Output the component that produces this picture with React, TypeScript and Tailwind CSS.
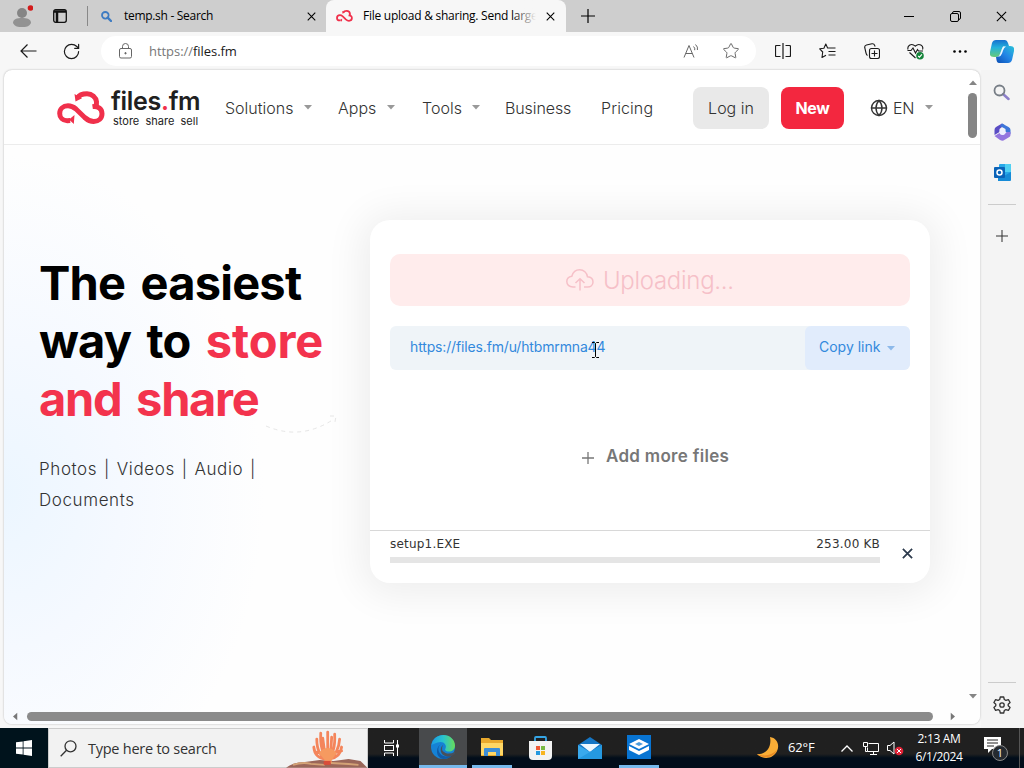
import type { ReactNode } from "react";
import { Globe, RotateCw, Search, Settings, Star } from "lucide-react";

const Slot = ({ className, children }: { className: string; children?: ReactNode }) => (
  <div className={`flex shrink-0 items-center justify-center ${className}`}>{children}</div>
);

const Caret = ({ className = "text-[#999]" }: { className?: string }) => (
  <svg className={`shrink-0 ${className}`} width="8" height="5" viewBox="0 0 8 5" fill="currentColor">
    <path d="M0 0h8L4 4.5z" />
  </svg>
);

const Cross = ({ size = 10, width = 1.2 }: { size?: number; width?: number }) => (
  <svg width={size} height={size} viewBox="0 0 10 10" stroke="currentColor" strokeWidth={width} fill="none">
    <path d="M.8.8l8.4 8.4M9.2.8L.8 9.2" />
  </svg>
);

const Plus = ({ size = 13, width = 1.2 }: { size?: number; width?: number }) => (
  <svg width={size} height={size} viewBox="0 0 14 14" stroke="currentColor" strokeWidth={width} fill="none">
    <path d="M7 0v14M0 7h14" />
  </svg>
);

const CloudLogo = ({ width, height }: { width: number; height: number }) => (
  <svg width={width} height={height} viewBox="0 0 48 34" fill="none" stroke="#f0304b" strokeWidth="5">
    <path d="M20.500 7C22.500 3.500 26 2.800 30 2.800c5 0 9 3.400 9.500 8 .2 2 0 3-.8 4.400" />
    <path d="M35.500 15.600c5.500-.8 9.500 2.400 9.500 7.200 0 4.700-3.800 7.700-8.300 7.700-4 0-6.500-1.800-9-4L19 18c-2.500-2-5-3.200-8-3.200-5 0-8.300 3.400-8.300 7.600 0 4 3 7.300 7.500 7.300l3-.2" />
    <path d="M17.500 3L18.500 10.500l6.500-3.200zM17.500 24l-5.500 4.500 4.800 4.500z" fill="#f0304b" stroke="none" />
  </svg>
);

const TabBar = () => (
  <div className="flex h-8 shrink-0 bg-[#cecece] text-black">
    <Slot className="w-11">
      <svg width="22" height="24" viewBox="0 0 22 24">
        <circle cx="11" cy="9" r="5" fill="#858585" />
        <path d="M2 19c0-4 4-5 9-5s9 1 9 5c-2 4-5 4-9 4s-7 0-9-4z" fill="#929292" />
        <circle cx="19.500" cy="4" r="2.800" fill="#d31b1b" />
      </svg>
    </Slot>
    <Slot className="w-8">
      <svg width="14" height="14" viewBox="0 0 14 14" fill="none" stroke="#111" strokeWidth="1.3">
        <rect x=".7" y=".7" width="12.600" height="12.600" rx="2" />
        <path d="M1 2.500h12M4 3v10" strokeWidth="2.500" />
      </svg>
    </Slot>
    <div className="ml-[11px] h-5 w-px self-center bg-[#888]" />
    <Slot className="ml-1.5 w-6">
      <svg width="11" height="11" viewBox="0 0 11 11" fill="none" stroke="#3f7cc2">
        <circle cx="4.300" cy="4.300" r="3.300" strokeWidth="1.800" />
        <path d="M6.700 6.700L10 10" strokeWidth="2.400" strokeLinecap="round" />
      </svg>
    </Slot>
    <div className="ml-1.5 w-[176px] font-['Open_Sans'] text-xs leading-8 tracking-[-0.3px]">temp.sh - Search</div>
    <Slot className="w-[22px]"><Cross size={9} /></Slot>
    <div className="ml-[4px] flex w-[240px] rounded-t-lg bg-[#f7f7f7]">
      <Slot className="ml-2 w-5"><CloudLogo width={17} height={12} /></Slot>
      <div className="relative ml-[9px] w-[173px] overflow-hidden whitespace-nowrap font-['Open_Sans'] text-xs leading-8 tracking-[-0.25px]">
        File upload &amp; sharing. Send large
        <div className="absolute inset-y-0 right-0 w-6 bg-linear-to-r from-transparent to-[#f7f7f7]" />
      </div>
      <Slot className="ml-[3px] w-[22px]"><Cross size={9} /></Slot>
    </div>
    <Slot className="w-[43px]"><Plus size={14} /></Slot>
    <div className="ml-auto flex">
      <Slot className="w-[46px]"><div className="h-px w-2.5 bg-black" /></Slot>
      <Slot className="w-[46px]">
        <svg width="11" height="11" viewBox="0 0 11 11" fill="none" stroke="black">
          <rect x=".5" y="2.500" width="8" height="8" rx="1.500" />
          <path d="M2.500 2.500v-.5Q2.500.5 4 .5h5q1.500 0 1.500 1.500v5q0 1.500-2 1.500" />
        </svg>
      </Slot>
      <Slot className="w-[46px]"><Cross size={11} width={1} /></Slot>
    </div>
  </div>
);

const Toolbar = () => (
  <div className="flex h-[38px] shrink-0 items-center bg-[#f7f7f7] pl-1.5 text-[#1a1a1a]">
    <Slot className="w-11">
      <svg width="17" height="14" viewBox="0 0 17 14" fill="none" stroke="currentColor" strokeWidth="1.2">
        <path d="M16.500 7H1M7.500.5L1 7l6.500 6.500" />
      </svg>
    </Slot>
    <Slot className="w-[43px]"><RotateCw size={19} strokeWidth={1.5} /></Slot>
    <div className="ml-2 flex h-[30px] w-[655px] items-center rounded-full bg-white">
      <Slot className="ml-3 w-6 text-[#666]">
        <svg width="13" height="16" viewBox="0 0 13 16" fill="none" stroke="currentColor">
          <rect x=".5" y="5.500" width="12" height="9.500" rx="1.500" />
          <path d="M3.500 5.500V3.500a3 3 0 016 0v2" />
          <circle cx="6.500" cy="10.200" r=".7" fill="currentColor" />
        </svg>
      </Slot>
      <div className="ml-3 pt-px font-['Open_Sans'] text-[13px] tracking-[-0.05px] text-[#777]">
        https://<span className="text-[#1a1a1a]">files.fm</span>
      </div>
      <Slot className="ml-auto w-10 text-[#666]">
        <svg width="17" height="16" viewBox="0 0 17 16" fill="none" stroke="currentColor">
          <path d="M1 14.500L6 2.500l5 12M2.800 10.500h6.400M10.500 3.500q1.800 1.500 1.200 3.700M12.500 1.500q2.800 2.500 1.900 5.500" />
        </svg>
      </Slot>
      <Slot className="mr-[5px] w-10 text-[#666]"><Star size={18} strokeWidth={1.3} /></Slot>
    </div>
    <Slot className="ml-[5px] w-11">
      <svg width="16" height="16" viewBox="0 0 16 16" fill="none" stroke="currentColor">
        <path d="M5.500 2.500h-4q-1 0-1 1v9q0 1 1 1h4M10.500 2.500h4q1 0 1 1v9q0 1-1 1h-4M8 0v16" strokeWidth="1.200" />
      </svg>
    </Slot>
    <Slot className="w-[45px]">
      <svg width="17" height="16" viewBox="0 0 17 16" fill="none" stroke="currentColor" strokeWidth="1.100" strokeLinejoin="round">
        <path d="M10 5L8.600 5 6.800 1 4.900 5.200.7 5.800l3 3.200L3 14.500l4-2.200M10 5h6.500M9.500 8.500h7M9.500 12h7" />
      </svg>
    </Slot>
    <Slot className="w-11">
      <svg width="16" height="17" viewBox="0 0 16 17" fill="none" stroke="currentColor" strokeWidth="1.100">
        <rect x="5.500" y="5.500" width="10" height="10" rx="2" />
        <path d="M10.500 7.500v6M7.500 10.500h6M3.500 12.500Q2.500 12 2 10L.7 4.500Q.5 2.500 2.500 2L8 .8q2-.3 2.700 1.700l.5 1" />
      </svg>
    </Slot>
    <Slot className="w-[43px]">
      <svg width="17" height="17" viewBox="0 0 17 17" fill="none" stroke="currentColor" strokeWidth="1.100">
        <path d="M1 6.500C0 2.500 4.500-.5 8.300 3.200 12-.5 17 2.500 15.500 6.500M.5 7.500H4L6 5l2.500 5 2-3.500 1 1.500h4.500M2.500 9.500l6 5.500" />
        <circle cx="13" cy="12.700" r="3.800" fill="#16843b" stroke="none" />
        <path d="M11.200 13l1.300 1.200 2.400-2.800" stroke="white" />
      </svg>
    </Slot>
    <Slot className="ml-px w-11">
      <svg width="14" height="3" viewBox="0 0 14 3"><circle cx="1.500" cy="1.500" r="1.300" /><circle cx="7" cy="1.500" r="1.300" /><circle cx="12.500" cy="1.500" r="1.300" /></svg>
    </Slot>
    <Slot className="w-10">
      <svg width="24" height="23" viewBox="0 0 24 23">
        <defs>
          <linearGradient id="cpA" x1="0" y1="0" x2="0" y2="1"><stop stopColor="#1670cf" /><stop offset=".45" stopColor="#23b1dc" /><stop offset="1" stopColor="#66ca78" /></linearGradient>
          <linearGradient id="cpB" x1="1" y1="0" x2="0" y2="1"><stop stopColor="#2ac3d8" /><stop offset=".5" stopColor="#2385e6" /><stop offset="1" stopColor="#0c4fb4" /></linearGradient>
        </defs>
        <path d="M6 0h9q2 0 3 3l1 3h-4q-2 0-3 3l-2 5q-1 3-4 3H4q-5 0-4-5L2 3q1-3 4-3z" fill="url(#cpA)" />
        <path d="M18 23H9q-2 0-2.500-3L6 17q3 0 4-3l2-5q1-3 4-3h4q5 0 4 5l-2 9q-1 3-4 3z" fill="url(#cpB)" />
        <path d="M13 6.500h3q-2 1-3 4l-1 3q-1 3-4 3.500 1-.5 2-3l1.500-4q.5-2 1.500-3.500z" fill="#eefaff" />
      </svg>
    </Slot>
  </div>
);

const SiteHeader = () => (
  <header className="flex h-[75px] shrink-0 items-center border-b border-[#ececec] pt-px pl-[53px] font-[Inter] text-base font-light text-[#333]">
    <div className="flex w-[168px]">
      <div className="pt-0.5"><CloudLogo width={48} height={34} /></div>
      <div className="ml-1.5">
        <div className="h-[26px] text-[25px] leading-[25px] font-semibold tracking-[-0.3px] text-[#202020]">
          files<span className="text-[#f0304b]">.</span>fm
        </div>
        <div className="pl-0.5 text-[11px] leading-3 font-normal whitespace-pre text-[#222]">store  share  sell</div>
      </div>
    </div>
    <div className="flex w-[113px] items-center"><span className="w-[79px]">Solutions</span><Caret /></div>
    <div className="flex w-[84px] items-center"><span className="w-[49px]">Apps</span><Caret /></div>
    <div className="flex w-[83px] items-center"><span className="w-[50px]">Tools</span><Caret /></div>
    <div className="w-24 tracking-[-0.1px]">Business</div>
    <div className="w-[92px] tracking-[0.1px]">Pricing</div>
    <div className="h-[42px] w-[76px] rounded-lg bg-[#e9e9e9] text-center leading-[42px]">Log in</div>
    <div className="ml-3 h-[42px] w-[63px] rounded-lg bg-[#f3273f] text-center leading-[42px] font-bold tracking-[-0.4px] text-white">New</div>
    <Globe size={18} strokeWidth={1.9} className="ml-[26px]" />
    <span className="ml-[5px] w-8 tracking-[-0.2px]">EN</span>
    <Caret />
  </header>
);

const UploadCard = () => (
  <div className="mt-[75px] ml-[366px] flex h-[363px] w-[560px] flex-col rounded-[20px] bg-white pt-[34px] shadow-[0_3px_38px_9px_rgba(0,0,0,0.065)]">
    <div className="mx-5 flex h-[52px] items-center justify-center gap-[9px] rounded-[10px] bg-[#ffecec] text-[#f6c0c8]">
      <svg width="28" height="22" viewBox="0 0 28 22" fill="none" stroke="currentColor" strokeWidth="1.500">
        <path d="M9.500 18H7C3 18 .8 15.500.8 12.500c0-3 2.200-4.800 5-5.200C7 3 10 .8 13.700.8c4 0 7.300 3 7.800 7 3.500.3 5.500 2.500 5.500 5.200 0 3-2.300 5-5.500 5H18M14 21.500V10M9.500 14L14 9.700l4.500 4.300" />
      </svg>
      <span className="w-[131px] pt-0.5 font-[Inter] text-2xl font-light tracking-[-0.3px] whitespace-nowrap">Uploading...</span>
    </div>
    <div className="mx-5 mt-5 flex h-11 rounded-md bg-[#eff4f8] font-[Inter] text-sm leading-[42px] text-[#3389dd]">
      <div className="relative w-[415px] pl-5 tracking-[-0.15px]">
        https://files.fm/u/htbmrmna44
        <svg className="absolute top-4 left-[201px]" width="9" height="16" viewBox="0 0 9 16" fill="none" stroke="black">
          <path d="M1 .5h2.500l1 1 1-1H8M1 15.500h2.500l1-1 1 1H8M4.500 1.500v13" />
        </svg>
      </div>
      <div className="flex w-[105px] items-center rounded-md bg-[#e1ecfc] pl-3.5">
        <span className="w-[68px] pb-0.5">Copy link</span>
        <Caret className="text-[#8db9ea]" />
      </div>
    </div>
    <div className="flex h-[160px] items-center pt-4 pl-[212px] text-[#777]">
      <Plus size={12} width={1.5} />
      <span className="ml-3 pb-[3px] font-[Inter] text-[17px] font-semibold tracking-[0.3px]">Add more files</span>
    </div>
    <div className="flex flex-1 border-t border-[#d8d8d8] pl-5">
      <div className="w-[490px] pt-1">
        <div className="flex h-[18px] justify-between font-['DejaVu_Sans'] text-xs leading-[18px] tracking-[0.2px] text-[#333]">
          <span>setup1.EXE</span>
          <span>253.00 KB</span>
        </div>
        <div className="mt-1 h-1.5 bg-[#e5e5e5]" />
      </div>
      <div className="pt-[17px] pl-[22px] text-[#2d3b4d]"><Cross size={11} width={1.6} /></div>
    </div>
  </div>
);

const Page = () => (
  <div className="relative flex w-[976px] flex-col overflow-hidden rounded-lg bg-white shadow-[0_0_2px_rgba(0,0,0,0.3)]">
    <SiteHeader />
    <div className="flex flex-1 flex-col bg-[radial-gradient(ellipse_260px_340px_at_0_350px,#ecf6ff_0%,#f5f9ff_45%,#fefefe_100%)]">
      <div className="relative">
        <div className="absolute top-[109px] left-[35px]">
          <h1 className="font-[Inter] text-[47px] leading-[58px] font-bold whitespace-nowrap text-black">
            <span className="tracking-[-0.8px] [word-spacing:5px]">The easiest</span><br />
            <span className="tracking-[-0.8px] [word-spacing:5px]">way to </span>
            <span className="text-[#f3334d]">
              <span className="tracking-[-0.1px]">store</span><br />
              <span className="tracking-[-1.3px] [word-spacing:5px]">and share</span>
            </span>
          </h1>
          <p className="mt-[26px] font-[Inter] text-[17px] leading-[31px] font-light tracking-[0.6px] whitespace-nowrap text-[#333] [word-spacing:1.5px]">
            Photos | Videos | Audio |<br />Documents
          </p>
          <svg className="absolute top-[157px] left-[227px]" width="80" height="24" viewBox="0 0 80 24" fill="none" stroke="#e6e6e6" strokeDasharray="4 4">
            <path d="M0 15Q35 30 68 8M64 5l6 0-1 6" />
          </svg>
        </div>
        <UploadCard />
      </div>
    </div>
    <div className="absolute top-0 right-px flex h-[640px] w-[13px] flex-col items-center pt-2.5 text-[#858585]">
      <Caret className="rotate-180" />
      <div className="mt-2 h-[45px] w-[9px] rounded-full bg-[#858585]" />
      <Caret className="mt-auto mb-[11px]" />
    </div>
    <div className="absolute right-0 bottom-[3px] left-0 flex h-[9px] items-center pl-[7px] text-[#777]">
      <Caret className="rotate-90" />
      <div className="ml-2 h-[9px] w-[906px] rounded-full bg-[#8b8b8b]" />
      <Caret className="ml-4 -rotate-90" />
    </div>
  </div>
);

const Sidebar = () => (
  <aside className="ml-px flex w-[43px] flex-col items-center bg-[#f4f4f4] pr-0.5 text-[#333]">
    <Slot className="h-11">
      <svg width="17" height="17" viewBox="0 0 17 17" fill="none">
        <path d="M10 10l5.500 5" stroke="#8c7fc9" strokeWidth="2.500" strokeLinecap="round" />
        <circle cx="6.500" cy="6.500" r="5" stroke="#777e86" strokeWidth="1.800" />
      </svg>
    </Slot>
    <Slot className="h-9">
      <svg className="ml-px" width="17" height="18" viewBox="0 0 17 18">
        <path d="M8 .5L2 4Q.5 5 .5 7v5l5-3V6l5-4z" fill="#5a4cc4" />
        <path d="M8 .5l6.500 3.500q2 1 2 3v4l-5-2V6L6 3z" fill="#3e76d9" />
        <path d="M16.500 9v3q0 1.500-2 2.500L9.500 17.500Q8 18 6 17l-5.500-4 5-3 3.500 2 4-3z" fill="#9476df" />
        <circle cx="8.500" cy="9" r="3" fill="#eef0ff" />
      </svg>
    </Slot>
    <Slot className="h-[45px]">
      <svg className="ml-px" width="17" height="17" viewBox="0 0 17 17">
        <rect x="5" width="12" height="15" rx="1" fill="#28a8e8" />
        <path d="M11 0h6v8h-6z" fill="#50d0f2" />
        <path d="M4 8l6 4 7-4v8q0 1-1 1H4z" fill="#168bd7" />
        <rect y="3" width="11" height="11" rx="1" fill="#0a63b8" />
        <circle cx="5.500" cy="8.500" r="2.500" fill="none" stroke="white" strokeWidth="1.500" />
      </svg>
    </Slot>
    <div className="mt-[9px] h-px w-7 bg-[#ccc]" />
    <Slot className="mt-[9px] h-11"><Plus size={12} /></Slot>
    <div className="mt-auto mb-[13px] h-px w-7 bg-[#ccc]" />
    <svg className="mb-3.5" width="18" height="18" viewBox="0 0 18 18" fill="none" stroke="currentColor" strokeWidth="1.300" strokeLinejoin="round">
      <path d="M7.300 1h3.400l.6 2.500 1.600.9 2.500-.8 1.700 2.900-1.900 1.700v1.600l1.900 1.700-1.700 2.900-2.500-.8-1.600.9-.6 2.500H7.300l-.6-2.500-1.600-.9-2.500.8-1.700-2.900 1.900-1.700V8.200L.9 6.500l1.700-2.900 2.500.8 1.600-.9z" />
      <circle cx="9" cy="9" r="2.200" />
    </svg>
  </aside>
);

const Coral = () => (
  <svg width="82" height="39" viewBox="0 0 82 39">
    <path d="M0 39q8-6 19-6l15-2 14 1 15-2 12 2 7 7z" fill="#9a6659" />
    <path d="M7 36q10-3 18-1l14 1M45 34l18 1 10 1" stroke="#d3a276" strokeWidth="2" fill="none" />
    <g fill="none" stroke="#f4855b" strokeWidth="2.800" strokeLinecap="round">
      <path d="M42 33V3M42 28Q34 24 35 4M42 29Q50 24 49 5M41 30Q31 26 31 10M43 30Q53 25 54 10M40 30Q29 29 28 18M44 30Q55 28 56 18M39 24L37 9M45 24L46 8M34 24L29 23M51 23L56 22" />
    </g>
    <path d="M33 24q9-10 18 0l-5 7v3h-7v-3z" fill="#f69a60" />
    <path d="M38 32h7v4h-7z" fill="#d94d39" />
  </svg>
);

const Taskbar = () => (
  <footer className="flex h-10 shrink-0 bg-linear-to-b from-[#202020] from-65% to-[#020d1a] to-75% font-['Open_Sans'] text-white">
    <Slot className="w-12 bg-[#00131c]">
      <svg width="16" height="16" viewBox="0 0 16 16" fill="white"><path d="M0 2.300L6.700 1.400v6.200H0zM7.500 1.300L16 0v7.600H7.500zM0 8.400h6.700v6.200L0 13.700zM7.500 8.400H16V16l-8.500-1.300z" /></svg>
    </Slot>
    <div className="flex w-80 items-center border border-[#ccc] bg-[#f2f2f2] pl-[11px] text-[#333]">
      <svg className="shrink-0" width="17" height="17" viewBox="0 0 17 17" fill="none" stroke="currentColor" strokeWidth="1.300">
        <circle cx="10.500" cy="6.300" r="5.500" />
        <path d="M6.500 10.300L.7 16.200" />
      </svg>
      <span className="ml-[11px] w-[199px] pt-px text-[14.500px] leading-9 tracking-[-0.25px] whitespace-nowrap">Type here to search</span>
      <Coral />
    </div>
    <Slot className="w-[51px]">
      <svg className="ml-[-4px]" width="17" height="16" viewBox="0 0 17 16" fill="none" stroke="white">
        <path d="M1.500 0v3h9V0M1.500 16v-3h9v3M14.500 0v16" />
        <rect x="1.500" y="5.500" width="9" height="5" />
        <path d="M13 4.500h3v3h-3z" fill="white" stroke="none" />
      </svg>
    </Slot>
    <Slot className="w-12 border-b-[3px] border-[#76b9ed] bg-[#484a4c]">
      <svg width="24" height="24" viewBox="0 0 24 24">
        <defs>
          <linearGradient id="edgeA" x1="0" y1="0" x2="1" y2="0"><stop stopColor="#1c9be5" /><stop offset=".5" stopColor="#29c4ce" /><stop offset="1" stopColor="#68dc58" /></linearGradient>
        </defs>
        <circle cx="12" cy="12" r="12" fill="#1582d5" />
        <path d="M.5 10C1.500 3.500 7 0 12.500 0 19 0 24 5 24 10.500c0 4-3 6-6 6-3.500 0-4.500-1.500-3.500-3 1.500-3-1-6.500-5-6.500-4 0-8 3-9 3z" fill="url(#edgeA)" />
        <path d="M9.500 9.500C5 13 8 21 15 21.500q4 0 7-2.500Q19 24 12 24C5 23 4 13 9.500 9.500z" fill="#105ba7" />
        <path d="M12 10q-3 5 2.500 8 4 1.500 9.500-1v2q-4 3-8 2.500C9 20.500 8 13 12 10z" fill="#48505a" />
      </svg>
    </Slot>
    <Slot className="ml-[5px] w-10 border-b-[3px] border-[#76b9ed]">
      <svg width="22" height="20" viewBox="0 0 22 20">
        <path d="M0 1h8l2 2h12v16H0z" fill="#e9a92d" />
        <path d="M0 6h22v12H0z" fill="#ffd765" />
        <path d="M3 19v-7q0-1 1-1h14q1 0 1 1v7h-4v-4H7v4z" fill="#3d8ed7" />
      </svg>
    </Slot>
    <Slot className="ml-2 w-10">
      <svg width="23" height="24" viewBox="0 0 23 24">
        <path d="M6 6V2q0-1 1-1h9q1 0 1 1v4" fill="none" stroke="#35a5e5" strokeWidth="1.800" />
        <path d="M0 5h23v15q0 4-4 4H4q-4 0-4-4z" fill="#f3f3f3" />
        <path d="M7 10h4v4H7z" fill="#ef5935" /><path d="M12 10h4v4h-4z" fill="#78b943" /><path d="M7 15h4v4H7z" fill="#2699df" /><path d="M12 15h4v4h-4z" fill="#f8b520" />
      </svg>
    </Slot>
    <Slot className="ml-[10px] w-10">
      <svg width="24" height="22" viewBox="0 0 24 22">
        <path d="M0 8L12 0l12 8v14H0z" fill="#1676c5" />
        <path d="M2 7h20l-10 8z" fill="#eef8ff" />
        <path d="M0 8l12 7 12-7v14H0z" fill="#39a9ed" />
        <path d="M0 22L24 8v14z" fill="#2599e1" />
      </svg>
    </Slot>
    <Slot className="ml-[9px] w-10 border-b-[3px] border-[#76b9ed]">
      <svg width="24" height="24" viewBox="0 0 24 24">
        <path d="M0 0h24v24H0z" fill="#0874d2" />
        <path d="M12 4l10 5-10 5L2 9zM2 11l10 5 10-5v4l-10 5-10-5z" fill="white" />
        <path d="M8 9l4-2 4 2-4 2z" fill="#4b9bdc" />
      </svg>
    </Slot>
    <div className="ml-auto flex items-center">
      <svg width="23" height="22" viewBox="0 0 23 22">
        <path d="M14 0c7 1 10 8 7 14-3 7-13 10-20 3 9 1 15-7 13-17z" fill="#f9ad36" />
        <path d="M21 13c-3 7-12 10-20 4 8 3 15 1 20-4z" fill="#e78a25" />
      </svg>
      <span className="ml-[9px] w-[53px] text-[13px] tracking-[-0.15px]">62°F</span>
      <svg width="12" height="7" viewBox="0 0 12 7" fill="none" stroke="white" strokeWidth="1.300"><path d="M.5 6.500L6 1l5.500 5.500" /></svg>
      <svg className="ml-2.5" width="17" height="15" viewBox="0 0 17 15" fill="none" stroke="white">
        <path d="M5.500 2.500h10v8H4.500v-4M10.500 10.500v3M7 13.500h7M.5 1.500h4v4h-4zM2.500 5.500v5h2" />
      </svg>
      <svg className="ml-[7px]" width="17" height="16" viewBox="0 0 17 16" fill="none" stroke="white">
        <path d="M.5 5.500H3L7 2v12L3 10.500H.5z" />
        <circle cx="12" cy="11" r="4.300" fill="#e22337" stroke="none" /><path d="M10 9l4 4M14 9l-4 4" />
      </svg>
      <div className="ml-[3px] w-[64px] text-center text-xs leading-[18px] tracking-[-0.35px] whitespace-nowrap">2:13 AM<br />6/1/2024</div>
      <div className="relative ml-[13px] h-6 w-6">
        <svg width="17" height="17" viewBox="0 0 17 17"><path d="M0 1h17v12H8l-4 4v-4H0z" fill="white" /><path d="M3 4h11M3 7h11M3 10h7" stroke="#222" /></svg>
        <div className="absolute top-[9px] left-[8px] size-4 rounded-full border border-[#888] bg-[#252a30] text-center text-[11px] leading-3.5">1</div>
      </div>
      <div className="ml-[11px] mr-1 h-10 w-px bg-[#555]" />
    </div>
  </footer>
);

const App = () => (
  <div className="flex h-[768px] w-[1024px] flex-col overflow-hidden bg-[#f7f7f7]">
    <TabBar />
    <Toolbar />
    <main className="flex h-[658px] shrink-0">
      <div className="flex pb-1 pl-1"><Page /></div>
      <Sidebar />
    </main>
    <Taskbar />
  </div>
);

export default App;
